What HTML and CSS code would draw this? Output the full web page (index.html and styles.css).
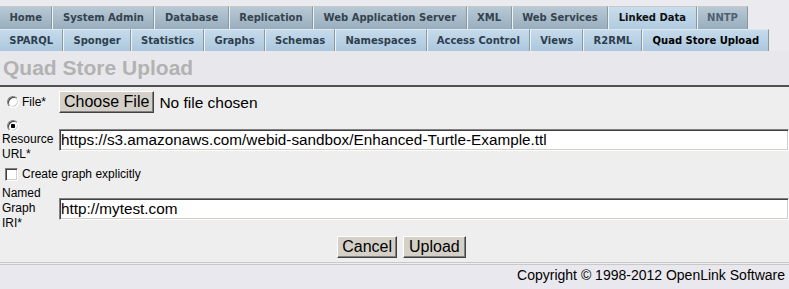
FILE: index.html
```html
<!DOCTYPE html>
<html>
<head>
<meta charset="utf-8">
<link rel="stylesheet" href="styles.css">
</head>
<body>
<div class="tabs tabs-top">
  <span class="tab">Home</span>
  <span class="tab">System Admin</span>
  <span class="tab">Database</span>
  <span class="tab">Replication</span>
  <span class="tab">Web Application Server</span>
  <span class="tab">XML</span>
  <span class="tab">Web Services</span>
  <span class="tab active">Linked Data</span>
  <span class="tab dim">NNTP</span>
</div>
<div class="tabs tabs-sub">
  <span class="tab">SPARQL</span>
  <span class="tab">Sponger</span>
  <span class="tab">Statistics</span>
  <span class="tab">Graphs</span>
  <span class="tab">Schemas</span>
  <span class="tab">Namespaces</span>
  <span class="tab">Access Control</span>
  <span class="tab">Views</span>
  <span class="tab">R2RML</span>
  <span class="tab active">Quad Store Upload</span>
</div>
<h1 class="title">Quad Store Upload</h1>
<form class="form">
  <div class="grid">
    <div class="label label-row1"><input type="radio" name="src" class="radio"><span class="small">File*</span></div>
    <div class="field field-row1"><button type="button" class="btn">Choose File</button><span class="nofile">No file chosen</span></div>

    <div class="label label-stack"><input type="radio" name="src" class="radio radio-block" checked><span>Resource URL*</span></div>
    <div class="field"><input type="text" class="text" value="https://s3.amazonaws.com/webid-sandbox/Enhanced-Turtle-Example.ttl"></div>

    <div class="check-row"><input type="checkbox" class="check"><span>Create graph explicitly</span></div>

    <div class="label label-stack">Named Graph IRI*</div>
    <div class="field"><input type="text" class="text" value="http://mytest.com"></div>

    <div class="buttons"><button type="button" class="btn">Cancel</button><button type="button" class="btn btn-upload">Upload</button></div>
  </div>
</form>
<div class="footer">Copyright © 1998-2012 OpenLink Software</div>
</body>
</html>
```
FILE: styles.css
```css
html, body {
  margin: 0;
  padding: 0;
}
body {
  background: #ebebef;
  font-family: "Liberation Sans", Arial, sans-serif;
  color: #000;
  padding-top: 6px;
}
.tabs {
  display: flex;
  font-family: "DejaVu Sans", Verdana, sans-serif;
  font-weight: bold;
  font-size: 10px;
}
.tab {
  display: block;
  padding: 0 9px;
  border-left: 1px solid #eef2f5;
  border-right: 1px solid #8a98a2;
  white-space: nowrap;
}
.tab:first-child {
  border-left: none;
}
.tabs-top .tab {
  height: 22px;
  line-height: 22px;
  padding: 0 9.5px;
  border-top: 1px solid #c8c8c8;
  background: linear-gradient(#b8c9d5, #98adbd);
  color: #34434f;
}
.tabs-top .tab.active {
  background: linear-gradient(#c9ddec, #b0cbe0);
  color: #111;
}
.tabs-top .tab.dim {
  color: #4f6072;
}
.tabs-sub .tab {
  height: 21px;
  line-height: 21px;
  padding: 0 9.2px;
  border-top: 1px solid #dde7ef;
  background: linear-gradient(#c6dbeb, #abc7dd);
  color: #2e3e4e;
}
.tabs-sub .tab.active {
  color: #000;
}
.title {
  margin: 0;
  height: 34px;
  line-height: 34px;
  padding-left: 3px;
  font-size: 21px;
  font-weight: bold;
  color: #b2b2b2;
  background: #e8e8ec;
  border-bottom: 2px solid #505050;
}
.form {
  margin: 0;
  background: #eeeeee;
  padding: 2px 0 2px 2px;
  border-bottom: 3px double #c8c8c8;
}
.grid {
  display: grid;
  grid-template-columns: 55px 1fr;
  column-gap: 2px;
  row-gap: 3px;
  align-items: center;
  font-size: 12px;
  line-height: 15px;
}
.label-row1 {
  height: 26px;
  display: flex;
  align-items: center;
}
.field-row1 {
  display: flex;
  align-items: center;
}
.small {
  font-size: 12px;
  margin-left: 3px;
}
.radio {
  appearance: none;
  -webkit-appearance: none;
  margin: 0 0 0 5px;
  width: 12px;
  height: 12px;
  border-radius: 50%;
  border: 1px solid;
  border-color: #808080 #ffffff #ffffff #808080;
  box-shadow: inset 1px 1px 0 #404040, inset -1px -1px 0 #d4d0c8;
  background: #fff;
  box-sizing: border-box;
}
.radio:checked {
  background: radial-gradient(circle, #000 0 2px, #fff 2.5px);
}
.radio-block {
  display: block;
  margin-top: 2px;
}
.label-stack {
  line-height: 15px;
}
.label-stack span {
  display: block;
}
.text {
  box-sizing: border-box;
  width: 100%;
  height: 22px;
  margin: 0;
  padding: 0 1px;
  font-family: "Liberation Sans", Arial, sans-serif;
  font-size: 15.3px;
  color: #000;
  background: #fff;
  border: 1px solid;
  border-color: #808080 #ffffff #ffffff #808080;
  box-shadow: inset 1px 1px 0 #404040, inset -1px -1px 0 #d4d0c8;
  outline: none;
}
.check-row {
  grid-column: 1 / span 2;
  height: 18px;
  display: flex;
  align-items: center;
}
.check {
  appearance: none;
  -webkit-appearance: none;
  box-sizing: border-box;
  width: 13px;
  height: 13px;
  margin: 0 4px 0 3px;
  border: 1px solid;
  border-color: #808080 #ffffff #ffffff #808080;
  box-shadow: inset 1px 1px 0 #404040, inset -1px -1px 0 #d4d0c8;
  background: #fff;
}
.btn {
  box-sizing: border-box;
  height: 22px;
  margin: 0;
  padding: 0 4px;
  font-family: "Liberation Sans", Arial, sans-serif;
  font-size: 16px;
  line-height: 18px;
  color: #000;
  background: #d4d0c8;
  border: 1px solid;
  border-color: #ffffff #404040 #404040 #ffffff;
  box-shadow: inset -1px -1px 0 #808080;
}
.btn-upload {
  padding: 0 5px;
}
.nofile {
  font-size: 15.5px;
  margin-left: 5px;
}
.buttons {
  grid-column: 1 / span 2;
  height: 26px;
  display: flex;
  justify-content: center;
  align-items: center;
  gap: 6px;
  padding-left: 12px;
}
.footer {
  background: #e9e8ee;
  text-align: right;
  font-size: 14px;
  line-height: 16px;
  padding: 2px 4px 8px 0;
  color: #000;
}
```
